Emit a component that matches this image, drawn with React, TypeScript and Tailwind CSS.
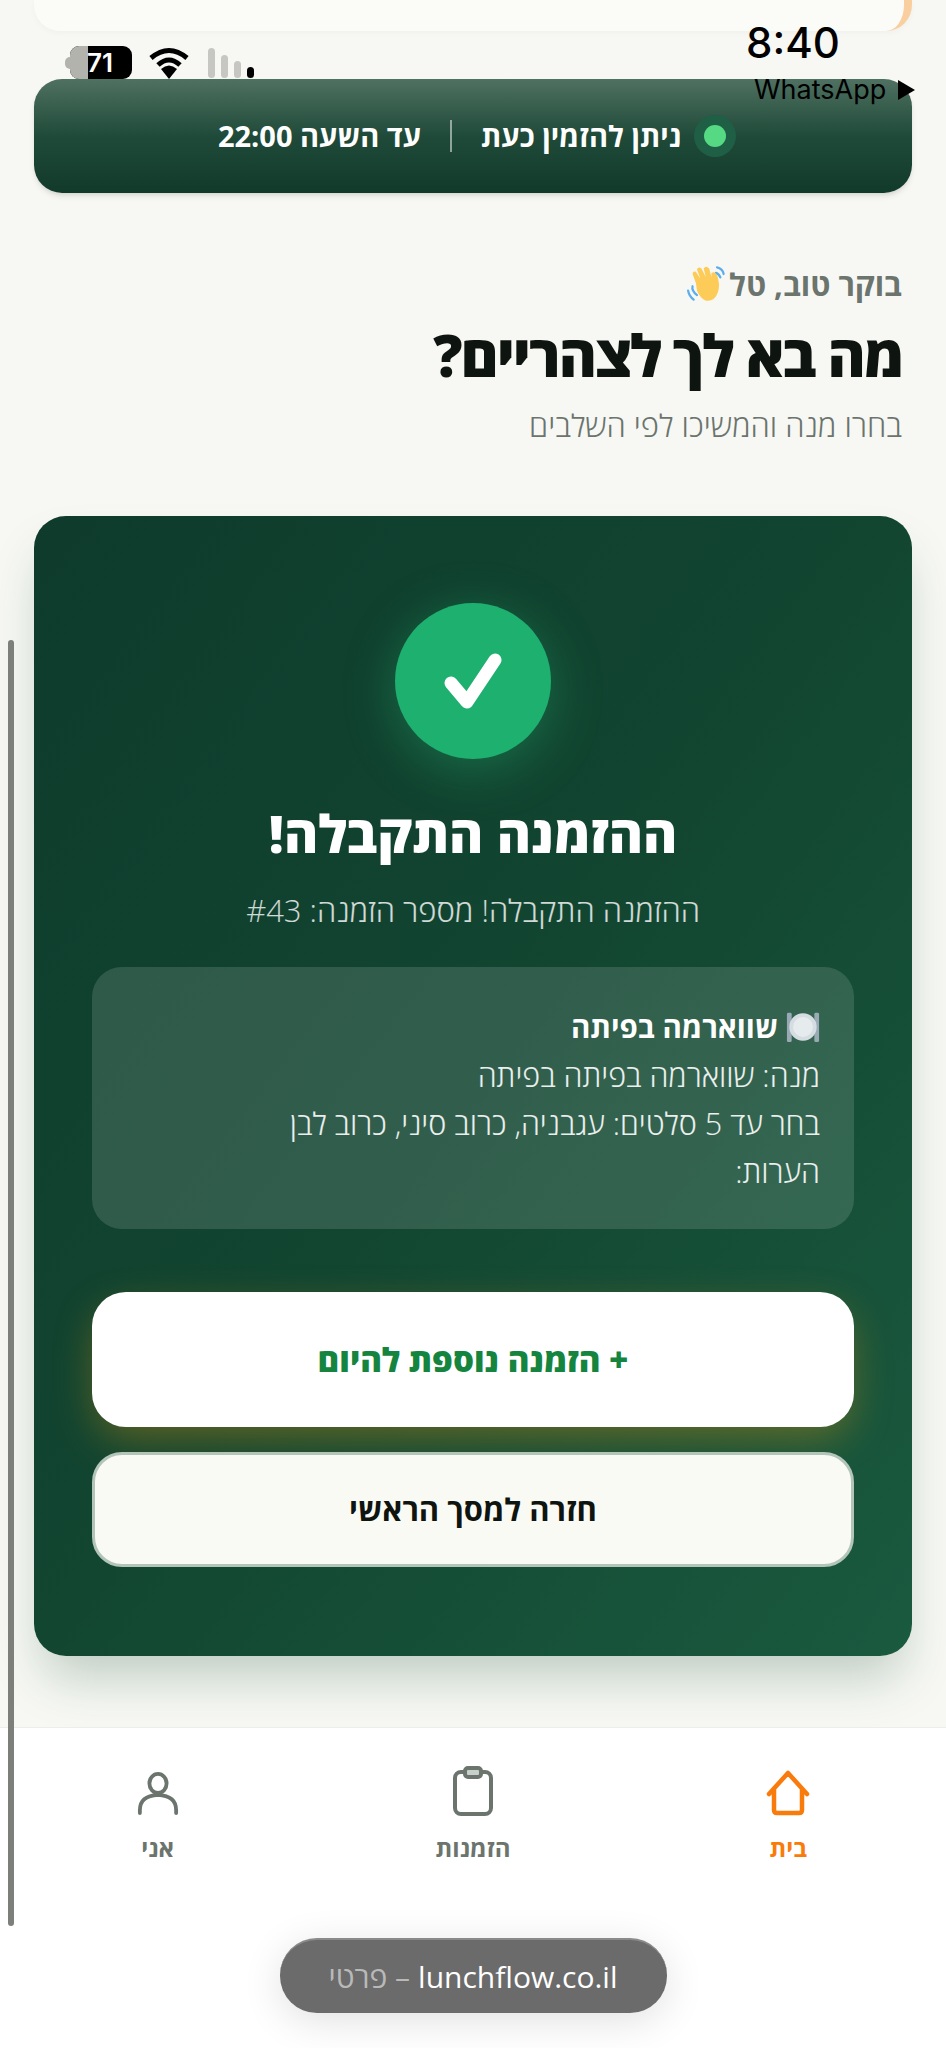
const font = { fontFamily: '"Open Sans", "Liberation Sans", sans-serif' }

function Wave() {
  return (
    <svg viewBox="0 0 36 36" className="w-[40px] h-[40px]">
      <path d="M9 28 Q4 24 5 20" fill="none" stroke="#5dadec" strokeWidth="2" strokeLinecap="round" />
      <path d="M6 32 Q2 29 1 24" fill="none" stroke="#5dadec" strokeWidth="2" strokeLinecap="round" />
      <path d="M27 3 Q32 4 33 9" fill="none" stroke="#5dadec" strokeWidth="2" strokeLinecap="round" />
      <path d="M26 8 Q29 9 30 12" fill="none" stroke="#5dadec" strokeWidth="2" strokeLinecap="round" />
      <path d="M8 17 L5 9 Q5 6 8 7 L12 13 L9 5 Q10 2 13 4 L17 12 L15 4 Q17 1 20 4 L22 12 L22 8 Q25 6 27 10 Q30 18 28 25 Q25 34 17 33 Q12 31 9 24 Z" fill="#fdcb58" />
    </svg>
  )
}

function Plate() {
  return (
    <svg viewBox="0 0 36 36" className="w-[34px] h-[36px]">
      <rect x="1" y="3" width="5" height="31" rx="1.5" fill="#9aaab4" />
      <rect x="30" y="3" width="5" height="31" rx="1.5" fill="#9aaab4" />
      <circle cx="18" cy="18" r="14.5" fill="#d5dde2" />
      <circle cx="18" cy="18" r="10.5" fill="#e6ebee" />
    </svg>
  )
}

function StatusOverlay() {
  return (
    <div dir="ltr" className="absolute inset-x-0 top-0 h-[110px] z-20 pointer-events-none" style={{ fontFamily: 'Inter, sans-serif' }}>
      <div className="absolute left-[70px] top-[46px] w-[62px] h-[33px] rounded-[9px] overflow-hidden bg-black flex items-center justify-end pr-[19px]">
        <div className="absolute left-0 inset-y-0 w-[18px] bg-[#b3b3ae]" />
        <span className="relative text-[26px] font-semibold text-white">71</span>
      </div>
      <div className="absolute left-[65px] top-[57px] w-[5px] h-[12px] rounded-l-full bg-[#b3b3ae]" />
      <svg viewBox="0 0 42 32" className="absolute left-[148px] top-[47px] w-[42px] h-[32px]">
        <path d="M3 11 Q21 -4 39 11" fill="none" stroke="#000" strokeWidth="5" />
        <path d="M10 18 Q21 8 32 18" fill="none" stroke="#000" strokeWidth="5" />
        <path d="M13 22 Q21 15 29 22 L21 32 Z" fill="#000" />
      </svg>
      <div className="absolute left-[208px] top-[48px] h-[30px] flex items-end gap-[6px]">
        <div className="w-[7px] h-[30px] rounded-full bg-[#c6c6c2]" />
        <div className="w-[7px] h-[23px] rounded-full bg-[#c6c6c2]" />
        <div className="w-[7px] h-[17px] rounded-full bg-[#c6c6c2]" />
        <div className="w-[7px] h-[11px] rounded-full bg-black" />
      </div>
      <div className="absolute left-[746px] top-[18px] text-[42px] leading-[50px] font-medium text-black">8:40</div>
      <div className="absolute left-[754px] top-[74px] text-[27px] leading-[32px] text-black">WhatsApp</div>
      <div className="absolute left-[898px] top-[80px] w-0 h-0 border-y-[10px] border-y-transparent border-l-[17px] border-l-black" />
    </div>
  )
}

export default function App() {
  return (
    <div dir="rtl" style={font} className="relative w-[946px] h-[2048px] overflow-hidden bg-[#f7f8f4] flex flex-col">
      <StatusOverlay />
      <div className="absolute left-[8px] top-[640px] w-[6px] h-[1286px] rounded-full bg-[#7c7f7a] z-20" />

      <main className="flex-1 min-h-0 px-[34px]">
        <div className="h-[31px] rounded-b-[26px] bg-[#fbfbf8] border-r-[8px] border-r-[#f9cfa0] shadow-[0_2px_6px_rgba(0,0,0,0.03)]" />

        <div className="mt-[48px] h-[114px] pl-[8px] rounded-[28px] bg-gradient-to-b from-[#4f7162] via-[#1f4a39] to-[#123a2b] shadow-md flex items-center justify-center gap-[29px]">
          <div className="w-[42px] h-[42px] rounded-full bg-[#1f5f46] flex items-center justify-center">
            <div className="w-[22px] h-[22px] rounded-full bg-[#55d983]" />
          </div>
          <span className="text-[29px] font-bold text-white -mr-[16px]">ניתן להזמין כעת</span>
          <div className="w-[2px] h-[32px] bg-white/50" />
          <span className="text-[29px] font-bold text-white">עד השעה 22:00</span>
        </div>

        <div className="mt-[68px] pr-[10px]">
          <div className="flex items-center gap-[2px] h-[46px] text-[31px] font-bold text-[#6b746d]">
            <span>בוקר טוב, טל</span>
            <Wave />
          </div>
          <h1 className="mt-[12px] text-[58px] leading-[72px] font-extrabold tracking-[-2px] text-[#0e140f]">מה בא לך לצהריים?</h1>
          <p className="mt-[14px] text-[31px] leading-[40px] font-light text-[#6b746d]">בחרו מנה והמשיכו לפי השלבים</p>
        </div>

        <section className="mt-[71px] h-[1140px] rounded-[32px] bg-gradient-to-br from-[#0e3b2c] via-[#124631] to-[#1a5a3f] shadow-[0_30px_50px_-10px_rgba(20,70,45,0.25)] px-[58px] pt-[87px] flex flex-col items-center">
          <div className="w-[156px] h-[156px] rounded-full bg-[#1eb06f] shadow-[0_10px_50px_rgba(40,190,120,0.35)] flex items-center justify-center">
            <svg viewBox="0 0 58 56" className="w-[58px] h-[56px]">
              <path d="M7 30 L23 49 L51 7" fill="none" stroke="#fff" strokeWidth="13" strokeLinecap="round" strokeLinejoin="round" />
            </svg>
          </div>
          <h2 className="mt-[34px] h-[80px] text-[52px] leading-[80px] font-extrabold text-white">ההזמנה התקבלה!</h2>
          <p className="mt-[15px] h-[44px] text-[31px] leading-[44px] font-light text-white/80">ההזמנה התקבלה! מספר הזמנה: #43</p>

          <div className="mt-[35px] w-full h-[262px] rounded-[30px] bg-white/[0.13] px-[34px] pt-[36px] text-[30.5px] leading-[48px] font-light text-white/90">
            <div className="flex items-center gap-[8px] text-[29.5px] font-bold text-white">
              <Plate />
              <span>שווארמה בפיתה</span>
            </div>
            <div>מנה: שווארמה בפיתה בפיתה</div>
            <div>בחר עד 5 סלטים: עגבניה, כרוב סיני, כרוב לבן</div>
            <div>הערות:</div>
          </div>

          <button className="mt-[63px] w-full h-[135px] rounded-[34px] bg-white shadow-[0_14px_40px_-4px_rgba(245,158,11,0.35)] text-[33px] font-extrabold text-[#15843f]">
            + הזמנה נוספת להיום
          </button>
          <button className="mt-[25px] w-full h-[115px] rounded-[30px] bg-[#fafaf5] border-[3px] border-[#b3c4b9] text-[31px] font-bold text-[#0e140f]">
            חזרה למסך הראשי
          </button>
        </section>
      </main>

      <nav className="relative z-10 h-[321px] shrink-0 bg-white border-t border-[#eceee9] flex flex-col items-center">
        <div className="w-full grid grid-cols-3 pt-[38px]" dir="rtl">
          <div className="flex flex-col items-center text-[#f97b0b]">
            <svg viewBox="0 0 44 46" className="w-[44px] h-[46px] mt-[4px]" fill="none" stroke="currentColor" strokeWidth="4.5" strokeLinecap="round" strokeLinejoin="round">
              <path d="M3 24 L22 3 L41 24 M8 19 V40 Q8 43 11 43 H33 Q36 43 36 40 V19" />
            </svg>
            <span className="mt-[16px] text-[24px] font-bold leading-[32px]">בית</span>
          </div>
          <div className="flex flex-col items-center text-[#6b746d]">
            <svg viewBox="0 0 40 50" className="w-[42px] h-[50px]" fill="none" stroke="currentColor" strokeWidth="4" strokeLinejoin="round">
              <rect x="2" y="6" width="36" height="42" rx="6" />
              <rect x="12" y="2" width="16" height="9" rx="3" fill="#c9cfca" />
            </svg>
            <span className="mt-[16px] text-[24px] font-bold leading-[32px]">הזמנות</span>
          </div>
          <div className="flex flex-col items-center text-[#6b746d]">
            <svg viewBox="0 0 44 46" className="w-[42px] h-[46px] mt-[4px]" fill="none" stroke="currentColor" strokeWidth="4" strokeLinecap="round">
              <ellipse cx="22" cy="13" rx="9" ry="10" />
              <path d="M3 44 V41 Q3 26 22 25 Q41 26 41 41 V44" />
            </svg>
            <span className="mt-[16px] text-[24px] font-bold leading-[32px]">אני</span>
          </div>
        </div>
        <div className="mt-[74px] w-[387px] h-[75px] rounded-[37px] bg-[#6b6b6b] shadow-[0_8px_40px_rgba(0,0,0,0.12)] border-t-2 border-[#8a8a8a] flex items-center justify-center gap-[8px] text-[30px]">
          <span className="text-white">lunchflow.co.il</span>
          <span className="text-[#b9b9b9]">– פרטי</span>
        </div>
      </nav>
    </div>
  )
}
